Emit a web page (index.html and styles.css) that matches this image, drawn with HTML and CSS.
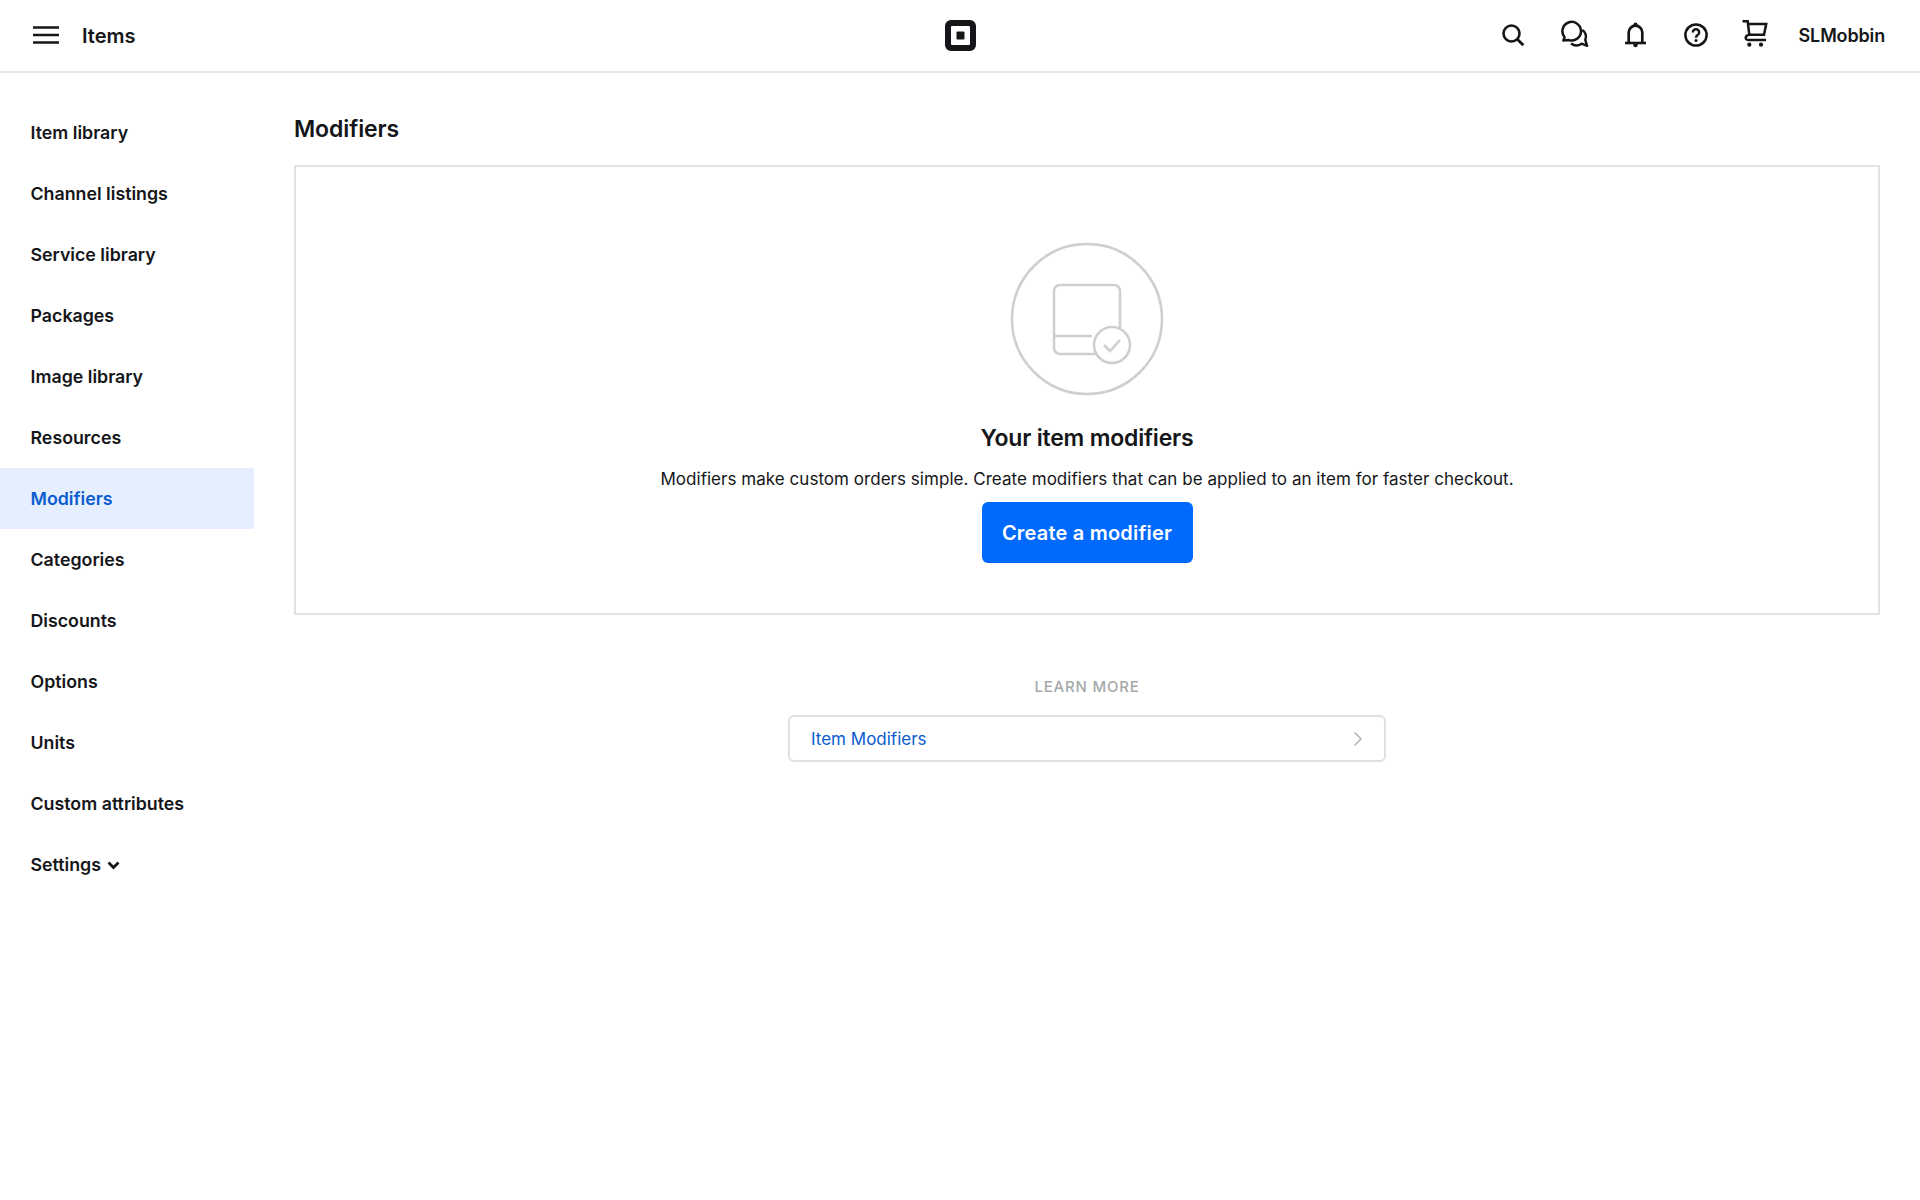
FILE: index.html
```html
<!DOCTYPE html>
<html lang="en">
<head>
<meta charset="utf-8">
<title>Modifiers</title>
<link rel="stylesheet" href="styles.css">
</head>
<body>
<header class="topbar">
  <div class="top-left">
    <svg class="burger" width="26" height="18" viewBox="0 0 26 18"><path d="M0 1.500h26M0 9h26M0 16.500h26" stroke="#151619" stroke-width="2.400" fill="none"/></svg>
    <span class="section-name">Items</span>
  </div>
  <svg class="logo" width="31" height="31" viewBox="0 0 31 31"><path fill-rule="evenodd" fill="#151619" d="M6 0h19a6 6 0 0 1 6 6v19a6 6 0 0 1-6 6H6a6 6 0 0 1-6-6V6a6 6 0 0 1 6-6zM7 6a1 1 0 0 0-1 1v17a1 1 0 0 0 1 1h17a1 1 0 0 0 1-1V7a1 1 0 0 0-1-1z"/><rect x="11.500" y="11.500" width="8" height="8" rx="1" fill="#151619"/></svg>
  <div class="top-right">
    <svg class="ico ico-search" width="24" height="24" viewBox="0 0 24 24"><circle cx="10.500" cy="10.500" r="8" fill="none" stroke="#151619" stroke-width="2.600"/><path d="M16.300 16.300l6 6" stroke="#151619" stroke-width="2.800" fill="none"/></svg>
    <svg class="ico ico-chat" width="28" height="30" viewBox="0 0 28 30"><path d="M2.300 20.500l1.300-3.300A9.300 9.300 0 1 1 8 20.100z" fill="none" stroke="#151619" stroke-width="2.500" stroke-linejoin="round"/><path d="M21.300 10A8 8 0 0 1 24.300 20l1.800 5.800-5.400-2.100a9 9 0 0 1-10.700-.2" fill="none" stroke="#151619" stroke-width="2.500" stroke-linejoin="round"/></svg>
    <svg class="ico ico-bell" width="23" height="28" viewBox="0 0 23 28"><path d="M4.700 22V12.500a6.800 6.800 0 0 1 13.600 0V22" fill="none" stroke="#151619" stroke-width="2.700"/><path d="M1 23h21" stroke="#151619" stroke-width="2.600" fill="none"/><circle cx="11.500" cy="4.500" r="2" fill="#151619"/><circle cx="11.500" cy="25" r="2.300" fill="#151619"/></svg>
    <svg class="ico ico-help" width="26" height="26" viewBox="0 0 26 26"><circle cx="13" cy="13" r="10.600" fill="none" stroke="#151619" stroke-width="2.500"/><path d="M9.800 10.400a3.200 3.200 0 1 1 4.900 2.700c-1.100.7-1.700 1.300-1.700 2.600" fill="none" stroke="#151619" stroke-width="2.400"/><circle cx="13" cy="18.600" r="1.500" fill="#151619"/></svg>
    <svg class="ico ico-cart" width="26" height="28" viewBox="0 0 26 28"><path d="M.5 2.300h5.200l1.600 13.400c-4.200.5-5 5.300-1 5.300H24" fill="none" stroke="#151619" stroke-width="2.500"/><path d="M6.200 5h18l-2.200 10.700H7.300" fill="none" stroke="#151619" stroke-width="2.500"/><circle cx="7.300" cy="25.700" r="2.100" fill="#151619"/><circle cx="19" cy="25.700" r="2.100" fill="#151619"/></svg>
    <span class="account">SLMobbin</span>
  </div>
</header>
<div class="shell">
  <nav class="sidenav">
    <a class="nav-item">Item library</a>
    <a class="nav-item">Channel listings</a>
    <a class="nav-item">Service library</a>
    <a class="nav-item">Packages</a>
    <a class="nav-item">Image library</a>
    <a class="nav-item">Resources</a>
    <a class="nav-item active">Modifiers</a>
    <a class="nav-item">Categories</a>
    <a class="nav-item">Discounts</a>
    <a class="nav-item">Options</a>
    <a class="nav-item">Units</a>
    <a class="nav-item">Custom attributes</a>
    <a class="nav-item">Settings <svg class="caret" width="13" height="9" viewBox="0 0 13 9"><path d="M1.500 1.500l5 5 5-5" fill="none" stroke="#151619" stroke-width="2.800"/></svg></a>
  </nav>
  <main class="content">
    <h1 class="page-title">Modifiers</h1>
    <section class="empty-card">
      <svg class="illus" width="154" height="154" viewBox="0 0 154 154">
        <g fill="none" stroke="#ccd0d1" stroke-width="2.600">
          <circle cx="77" cy="77" r="75"/>
          <path d="M110 86V49a6 6 0 0 0-6-6H50a6 6 0 0 0-6 6v57a6 6 0 0 0 6 6h36"/>
          <path d="M44 94h38"/>
          <circle cx="102" cy="103" r="18"/>
          <path d="M94 103l6 6 10-11"/>
        </g>
      </svg>
      <h2 class="empty-title">Your item modifiers</h2>
      <p class="empty-text">Modifiers make custom orders simple. Create modifiers that can be applied to an item for faster checkout.</p>
      <a class="primary-btn">Create a modifier</a>
    </section>
    <section class="learn">
      <div class="learn-label">LEARN MORE</div>
      <a class="learn-link"><span>Item Modifiers</span><svg width="10" height="16" viewBox="0 0 10 16"><path d="M1.500 1.500L8 8l-6.500 6.500" fill="none" stroke="#a9abac" stroke-width="1.400"/></svg></a>
    </section>
  </main>
</div>
</body>
</html>
```
FILE: styles.css
```css
* { box-sizing: border-box; }
html, body { margin: 0; padding: 0; background: #fff; }
body { font-family: Inter, "Liberation Sans", sans-serif; color: #151619; height: 1200px; overflow: hidden; }
.topbar { height: 73px; border-bottom: 2px solid #e6e6e6; display: flex; align-items: center; justify-content: space-between; padding: 0 35px 1px 36px; }
.top-left { display: flex; align-items: center; gap: 23px; width: 400px; }
.burger { display: block; margin-left: -3px; }
.section-name { font-size: 20px; font-weight: 600; margin-top: 2px; }
.logo { display: block; }
.top-right { display: flex; align-items: center; justify-content: flex-end; width: 400px; }
.ico { display: block; flex: none; }
.ico-search { margin-right: 36px; }
.ico-chat { margin-right: 35px; }
.ico-bell { margin-right: 36px; margin-bottom: 3px; }
.ico-help { margin-right: 33px; }
.ico-cart { margin-right: 31px; margin-bottom: 5px; }
.account { font-size: 18px; font-weight: 600; letter-spacing: -0.15px; }
.shell { display: flex; }
.sidenav { width: 254px; flex: none; padding-top: 29px; display: flex; flex-direction: column; }
.nav-item { height: 61px; display: flex; align-items: center; padding: 0 0 1px 30.500px; font-size: 17.800px; font-weight: 600; gap: 6px; }
.nav-item.active { background: #e5efff; color: #0a5ccf; }
.caret { margin-top: 3px; }
.content { flex: 1; padding: 0 40px; }
.page-title { font-size: 23px; font-weight: 600; line-height: 28px; margin: 42px 0 22px; letter-spacing: -0.1px; }
.empty-card { height: 450px; border: 2px solid #e3e3e3; display: flex; flex-direction: column; align-items: center; padding-top: 75px; }
.illus { display: block; }
.empty-title { font-size: 23px; font-weight: 600; line-height: 28px; margin: 28px 0 0; letter-spacing: -0.2px; }
.empty-text { font-size: 17px; line-height: 24px; margin: 15px 0 0; letter-spacing: 0.035px; }
.primary-btn { margin-top: 11px; width: 211px; height: 61px; background: #006aff; color: #fff; border-radius: 6px; display: flex; align-items: center; justify-content: center; font-size: 20px; font-weight: 600; letter-spacing: 0.2px; }
.learn { display: flex; flex-direction: column; align-items: center; }
.learn-label { margin-top: 62px; font-size: 15px; line-height: 20px; font-weight: 500; color: #a6a8a9; letter-spacing: 0.8px; }
.learn-link { margin-top: 18px; width: 598px; height: 47px; border: 2px solid #e0e0e0; border-radius: 6px; display: flex; align-items: center; justify-content: space-between; padding: 0 21px; font-size: 17px; color: #0a5ccf; }
```
